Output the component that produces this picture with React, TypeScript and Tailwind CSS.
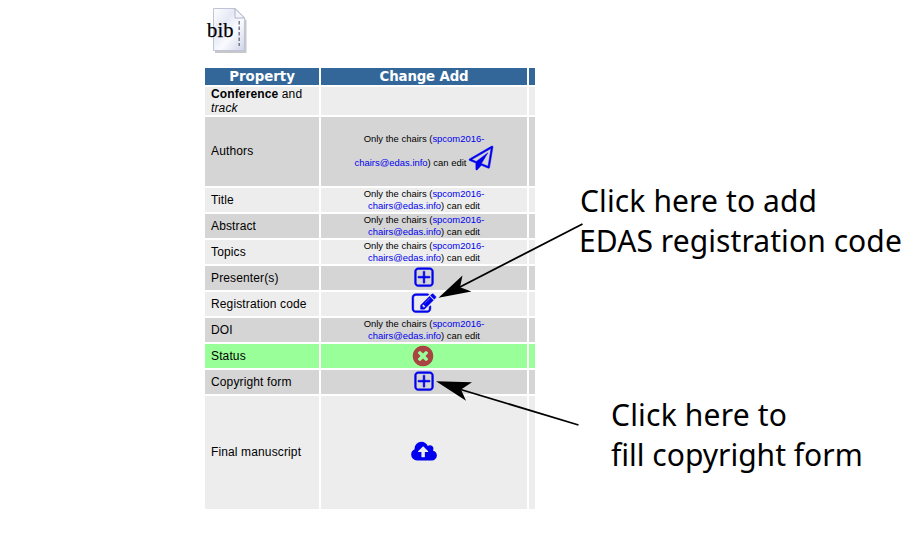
import type { ReactNode } from "react";

const PLUS_SQUARE =
  "M1344 800v64q0 14-9 23t-23 9h-352v352q0 14-9 23t-23 9h-64q-14 0-23-9t-9-23v-352h-352q-14 0-23-9t-9-23v-64q0-14 9-23t23-9h352v-352q0-14 9-23t23-9h64q14 0 23 9t9 23v352h352q14 0 23 9t9 23zm128 448v-832q0-66-47-113t-113-47h-832q-66 0-113 47t-47 113v832q0 66 47 113t113 47h832q66 0 113-47t47-113zm128-832v832q0 119-84.5 203.5t-203.5 84.5h-832q-119 0-203.500-84.500t-84.500-203.500v-832q0-119 84.500-203.500t203.500-84.500h832q119 0 203.500 84.500t84.500 203.500z";
const PENCIL_SQUARE =
  "M888 1184l116-116-152-152-116 116v56h96v96h56zm440-720q-16-16-33 1l-350 350q-17 17-1 33t33-1l350-350q17-17 1-33zm80 594v190q0 119-84.500 203.500t-203.500 84.500h-832q-119 0-203.500-84.500t-84.500-203.500v-832q0-119 84.500-203.500t203.500-84.500h832q63 0 117 25 15 7 18 23 3 17-9 29l-49 49q-14 14-32 8-23-6-45-6h-832q-66 0-113 47t-47 113v832q0 66 47 113t113 47h832q66 0 113-47t47-113v-126q0-13 9-22l64-64q15-15 35-7t20 29zm-96-738l288 288-672 672h-288v-288zm444 132l-92 92-288-288 92-92q28-28 68-28t68 28l152 152q28 28 28 68t-28 68z";
const TIMES_CIRCLE =
  "M1277 1122q0-26-19-45l-181-181 181-181q19-19 19-45 0-27-19-46l-90-90q-19-18-46-18-26 0-45 19l-181 181-181-181q-19-19-45-19-27 0-46 18l-90 90q-19 19-19 46 0 26 19 45l181 181-181 181q-19 19-19 45 0 27 19 46l90 90q19 18 46 18 26 0 45-19l181-181 181 181q19 19 45 19 27 0 46-18l90-90q19-19 19-46zm387-226q0 209-103 385.500t-279.500 279.500-385.500 103-385.500-103-279.500-279.500-103-385.500 103-385.500 279.500-279.500 385.500-103 385.500 103 279.500 279.500 103 385.500z";
const CLOUD_UPLOAD =
  "M1280 864q0-14-9-23l-352-352q-9-9-23-9t-23 9l-351 351q-10 12-10 24 0 14 9 23t23 9h224v352q0 13 9.500 22.500t22.500 9.500h192q13 0 22.500-9.500t9.500-22.500v-352h224q13 0 22.500-9.500t9.500-22.500zm640 288q0 159-112.500 271.500t-271.500 112.500h-1088q-185 0-316.500-131.500t-131.500-316.500q0-130 70-240t188-165q-2-30-2-43 0-212 150-362t362-150q156 0 285.500 87t188.500 231q71-62 166-62 106 0 181 75t75 181q0 76-41 138 130 31 213.500 135.500t83.500 238.500z";
const PAPER_PLANE =
  "M1764 11q33 24 27 64l-256 1536q-5 29-32 45-14 8-31 8-11 0-24-5l-527-215-298 327q-18 21-47 21-14 0-23-4-19-7-30-23.500t-11-36.500v-452l-472-193q-37-14-40-55-3-39 32-59l1664-960q35-21 68 2zm-342 1499l221-1323-1434 827 336 137 863-639-478 797z";

function Icon({ d, wide = false, className = "fill-[#0000ee]" }: { d: string; wide?: boolean; className?: string }) {
  return (
    <svg
      viewBox={wide ? "0 0 1920 1792" : "0 0 1792 1792"}
      className={`${wide ? "w-[26px]" : "w-6"} h-6 shrink-0 overflow-visible ${className}`}
    >
      <path d={d} />
    </svg>
  );
}

const outlined = "fill-[#0000ee] stroke-[#0000ee] [stroke-width:36]";

function ChairsOnly() {
  return (
    <div className="text-center text-[9.45px] leading-3">
      Only the chairs (<a className="text-[#0000ee]">spcom2016-</a>
      <br />
      <a className="text-[#0000ee]">chairs@edas.info</a>) can edit
    </div>
  );
}

function AuthorsNote() {
  return (
    <div className="flex flex-col items-center text-[9.45px] leading-3">
      <div className="-mt-px">
        Only the chairs (<a className="text-[#0000ee]">spcom2016-</a>
      </div>
      <div className="flex items-center gap-[3px]">
        <span className="pt-[11px]">
          <a className="text-[#0000ee]">chairs@edas.info</a>) can edit
        </span>
        <Icon d={PAPER_PLANE} className={`mt-px -mb-px ${outlined}`} />
      </div>
    </div>
  );
}

type Row = { label: ReactNode; height: string; color: string; content?: ReactNode };

const light = "bg-[#ededed]";
const dark = "bg-[#d5d5d5]";

const rows: Row[] = [
  {
    label: (
      <div className="leading-[14px]">
        <b>Conference</b> and
        <br />
        <i>track</i>
      </div>
    ),
    height: "h-7",
    color: light,
  },
  { label: <span className="mb-[2px]">Authors</span>, height: "h-[69px]", color: dark, content: <AuthorsNote /> },
  { label: "Title", height: "h-6", color: light, content: <ChairsOnly /> },
  { label: "Abstract", height: "h-6", color: dark, content: <ChairsOnly /> },
  { label: "Topics", height: "h-6", color: light, content: <ChairsOnly /> },
  {
    label: "Presenter(s)",
    height: "h-6",
    color: dark,
    content: <Icon d={PLUS_SQUARE} className={`mr-px mb-[0.4px] ${outlined}`} />,
  },
  {
    label: "Registration code",
    height: "h-6",
    color: light,
    content: <Icon d={PENCIL_SQUARE} className={`mb-[0.6px] ${outlined}`} />,
  },
  { label: "DOI", height: "h-6", color: dark, content: <ChairsOnly /> },
  {
    label: "Status",
    height: "h-6",
    color: "bg-[#99ff99]",
    content: <Icon d={TIMES_CIRCLE} className="mr-[2px] mb-px fill-[#a94442]" />,
  },
  {
    label: "Copyright form",
    height: "h-6",
    color: dark,
    content: <Icon d={PLUS_SQUARE} className={`mr-px mb-[0.4px] ${outlined}`} />,
  },
  {
    label: <span className="mb-[2px]">Final manuscript</span>,
    height: "h-[113px]",
    color: light,
    content: <Icon d={CLOUD_UPLOAD} wide className="mb-px fill-[#0000ee]" />,
  },
];

function BibIcon() {
  return (
    <svg className="block h-[60px] w-[60px]" viewBox="205 0 60 60">
      <defs>
        <linearGradient id="paper" x1="0" y1="0" x2="1" y2="1">
          <stop offset="0" stopColor="#ffffff" />
          <stop offset="0.35" stopColor="#e6e9f5" />
          <stop offset="0.6" stopColor="#fafbff" />
          <stop offset="1" stopColor="#cfd3e8" />
        </linearGradient>
      </defs>
      <path d="M215 10.500h21l10.500 10v32.500h-31.500z" fill="#b9b9bd" opacity="0.8" />
      <path d="M213.500 8.500h21.500l9.500 9.500v32.500h-31z" fill="url(#paper)" stroke="#c0c4d6" />
      <path d="M235 8.500v9.500h9.500z" fill="#f4f5fc" stroke="#a9adc0" strokeWidth="0.9" />
      <path d="M239.200 21v25" stroke="#77798a" strokeWidth="1.500" strokeDasharray="3.500 2" />
      <text
        x="207"
        y="37.200"
        fontFamily="'Liberation Serif', serif"
        fontSize="20.500"
        textLength="26.500"
        fill="#000"
        stroke="#000"
        strokeWidth="0.250"
      >
        bib
      </text>
    </svg>
  );
}

export default function App() {
  return (
    <div className="relative flex h-[547px] w-[903px] overflow-hidden bg-white pl-[205px] font-['Liberation_Sans',Arial,sans-serif] text-black">
      <div className="w-[330px] shrink-0">
        <div className="h-[68px]">
          <BibIcon />
        </div>
        <div className="flex flex-col gap-[2px] text-xs">
          <div className="flex h-[17px] gap-[2px] text-center font-['DejaVu_Sans',sans-serif] text-[13.33px] leading-[17px] font-bold text-white">
            <div className="w-[114px] bg-[#336699]">Property</div>
            <div className="w-[206px] bg-[#336699] tracking-[-0.15px]">Change Add</div>
            <div className="w-[6px] bg-[#336699]" />
          </div>
          {rows.map((row, i) => (
            <div key={i} className={`flex gap-[2px] ${row.height}`}>
              <div className={`flex w-[114px] items-center pl-[6px] tracking-[0.13px] ${row.color}`}>{row.label}</div>
              <div className={`flex w-[206px] items-center justify-center ${row.color}`}>{row.content}</div>
              <div className={`w-[6px] ${row.color}`} />
            </div>
          ))}
        </div>
      </div>

      <div className="shrink-0 pt-[181px] font-['Noto_Sans',sans-serif] text-[30px] leading-10 whitespace-nowrap">
        <div className="pl-[45px]">
          <div className="tracking-[0.12px]">Click here to add</div>
          <div className="-ml-px tracking-[0.08px]">EDAS registration code</div>
        </div>
        <div className="pt-[134px] pl-[76px]">
          <div className="tracking-[0.2px]">Click here to</div>
          <div>fill copyright form</div>
        </div>
      </div>

      {/* Callout arrows laid over the table */}
      <svg className="pointer-events-none absolute inset-0" width="903" height="547" viewBox="0 0 903 547">
        <g stroke="#000" strokeWidth="1.800">
          <path d="M582.500 224L458 288" />
          <path d="M578.500 425L459 389" />
        </g>
        <path d="M438.500 297.800L462.500 275.500L460 287.200L471.500 291.500Z" />
        <path d="M436 381.300L472 382.300L461 389.500L466 400.700Z" />
      </svg>
    </div>
  );
}
